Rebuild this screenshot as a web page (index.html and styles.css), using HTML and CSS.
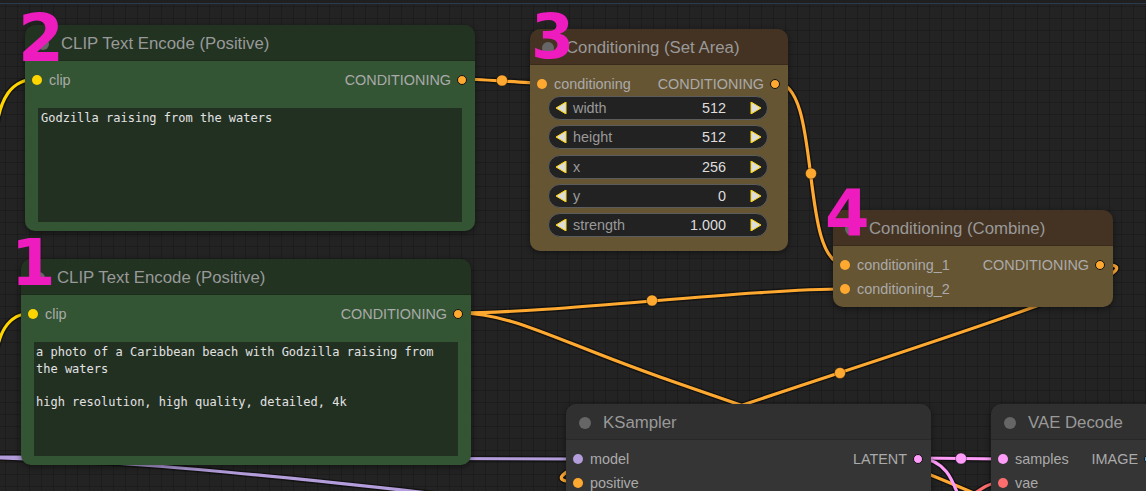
FILE: index.html
```html
<!DOCTYPE html>
<html>
<head>
<meta charset="utf-8">
<title>ComfyUI graph</title>
<link rel="stylesheet" href="styles.css">
</head>
<body>
<div class="canvas">
  <div class="topline"></div>

  <svg class="wires" width="1146" height="491" viewBox="0 0 1146 491">
    <g class="bd">
      <path d="M-4,130 C0,100 10,79 37,79"/>
      <path d="M-6,365 C-2,335 6,313 33,313"/>
      <path d="M-10,457 L578,459"/>
      <path d="M-100,456 C100,458 200,468 420,492 L700,530"/>
      <path d="M461,79 C481,79 522,83 542,83"/>
      <path d="M775,82 C824,82 797,265 846,265"/>
      <path d="M458,313 C555,313 749,289 846,289"/>
      <path d="M458,313 C512,313 555,340 660,377 S900,458 1000,505"/>
      <path d="M1100,264 C1241,264 437,482 578,482"/>
      <path d="M919,458 L1003,459"/>
      <path d="M919,458 C945,460 952,478 960,500"/>
      <path d="M965,500 C982,488 990,482 1003,482"/>
    </g>
    <path class="w yellow" d="M-4,130 C0,100 10,79 37,79"/>
    <path class="w yellow" d="M-6,365 C-2,335 6,313 33,313"/>
    <path class="w purple" d="M-10,457 L578,459"/>
    <path class="w purple" d="M-100,456 C100,458 200,468 420,492 L700,530"/>
    <path class="w orange" d="M461,79 C481,79 522,83 542,83"/>
    <path class="w orange" d="M775,82 C824,82 797,265 846,265"/>
    <path class="w orange" d="M458,313 C555,313 749,289 846,289"/>
    <path class="w orange" d="M458,313 C512,313 555,340 660,377 S900,458 1000,505"/>
    <path class="w orange" d="M1100,264 C1241,264 437,482 578,482"/>
    <path class="w pink" d="M919,458 C945,460 952,478 960,500"/>
    <path class="w red" d="M965,500 C982,488 990,482 1003,482"/>
    <path class="w pink" d="M919,458 L1003,459"/>
    <circle class="mid orange-f" cx="502" cy="80.5" r="5.5"/>
    <circle class="mid orange-f" cx="811" cy="173.5" r="5.5"/>
    <circle class="mid orange-f" cx="652" cy="300.5" r="5.5"/>
    <circle class="mid orange-f" cx="840" cy="373" r="5.5"/>
    <circle class="mid pink-f" cx="961" cy="458.5" r="5.5"/>
  </svg>

  <div class="node green n2">
    <div class="title"><span class="tdot"></span>CLIP Text Encode (Positive)</div>
    <div class="body">
      <div class="row">
        <div class="in"><span class="dot c-yellow"></span>clip</div>
        <div class="out">CONDITIONING<span class="dot odot c-orange"></span></div>
      </div>
      <div class="text">Godzilla raising from the waters</div>
    </div>
  </div>

  <div class="node green n1">
    <div class="title"><span class="tdot"></span>CLIP Text Encode (Positive)</div>
    <div class="body">
      <div class="row">
        <div class="in"><span class="dot c-yellow"></span>clip</div>
        <div class="out">CONDITIONING<span class="dot odot c-orange"></span></div>
      </div>
      <div class="text">a photo of a Caribbean beach with Godzilla raising from the waters

high resolution, high quality, detailed, 4k</div>
    </div>
  </div>

  <div class="node yellow n3">
    <div class="title"><span class="tdot"></span>Conditioning (Set Area)</div>
    <div class="body">
      <div class="row">
        <div class="in"><span class="dot c-orange"></span>conditioning</div>
        <div class="out">CONDITIONING<span class="dot odot c-orange"></span></div>
      </div>
      <div class="widgets">
        <div class="widget"><svg class="arr" viewBox="0 0 12 12"><path d="M10,0 L0,6 L10,12 Z"/></svg><span class="wl">width</span><span class="wv">512</span><svg class="arr" viewBox="0 0 12 12"><path d="M2,0 L12,6 L2,12 Z"/></svg></div>
        <div class="widget"><svg class="arr" viewBox="0 0 12 12"><path d="M10,0 L0,6 L10,12 Z"/></svg><span class="wl">height</span><span class="wv">512</span><svg class="arr" viewBox="0 0 12 12"><path d="M2,0 L12,6 L2,12 Z"/></svg></div>
        <div class="widget"><svg class="arr" viewBox="0 0 12 12"><path d="M10,0 L0,6 L10,12 Z"/></svg><span class="wl">x</span><span class="wv">256</span><svg class="arr" viewBox="0 0 12 12"><path d="M2,0 L12,6 L2,12 Z"/></svg></div>
        <div class="widget"><svg class="arr" viewBox="0 0 12 12"><path d="M10,0 L0,6 L10,12 Z"/></svg><span class="wl">y</span><span class="wv">0</span><svg class="arr" viewBox="0 0 12 12"><path d="M2,0 L12,6 L2,12 Z"/></svg></div>
        <div class="widget"><svg class="arr" viewBox="0 0 12 12"><path d="M10,0 L0,6 L10,12 Z"/></svg><span class="wl">strength</span><span class="wv">1.000</span><svg class="arr" viewBox="0 0 12 12"><path d="M2,0 L12,6 L2,12 Z"/></svg></div>
      </div>
    </div>
  </div>

  <div class="node yellow n4">
    <div class="title"><span class="tdot"></span>Conditioning (Combine)</div>
    <div class="body">
      <div class="row">
        <div class="in"><span class="dot c-orange"></span>conditioning_1</div>
        <div class="out">CONDITIONING<span class="dot odot c-orange"></span></div>
      </div>
      <div class="row">
        <div class="in"><span class="dot c-orange"></span>conditioning_2</div>
      </div>
    </div>
  </div>

  <div class="node grey n5">
    <div class="title"><span class="tdot"></span>KSampler</div>
    <div class="body">
      <div class="row">
        <div class="in"><span class="dot c-purple"></span>model</div>
        <div class="out">LATENT<span class="dot odot c-pink"></span></div>
      </div>
      <div class="row">
        <div class="in"><span class="dot c-orange"></span>positive</div>
      </div>
    </div>
  </div>

  <div class="node grey n6">
    <div class="title"><span class="tdot"></span>VAE Decode</div>
    <div class="body">
      <div class="row">
        <div class="in"><span class="dot c-pink"></span>samples</div>
        <div class="out">IMAGE<span class="dot odot c-blue"></span></div>
      </div>
      <div class="row">
        <div class="in"><span class="dot c-red"></span>vae</div>
      </div>
    </div>
  </div>

  <div class="num num2">2</div>
  <div class="num num3">3</div>
  <div class="num num1">1</div>
  <div class="num num4">4</div>
</div>
</body>
</html>
```

FILE: styles.css
```css
html, body {
  margin: 0;
  padding: 0;
  background: #222;
}

.canvas {
  position: relative;
  width: 1146px;
  height: 491px;
  overflow: hidden;
  background-color: #232323;
  background-image:
    linear-gradient(rgba(0, 0, 0, 0.16) 1px, transparent 1px),
    linear-gradient(90deg, rgba(0, 0, 0, 0.16) 1px, transparent 1px);
  background-size: 12px 12px;
  background-position: 5px 6px;
  font-family: "Liberation Sans", Arial, sans-serif;
}

.topline {
  position: absolute;
  left: 0;
  top: 0;
  width: 100%;
  height: 3px;
  background: #1f1f1f;
  border-bottom: 1px solid #2c3a4d;
}

/* wires */
.wires {
  position: absolute;
  left: 0;
  top: 0;
  overflow: visible;
}
.wires path {
  fill: none;
  stroke-linecap: round;
}
.bd path {
  stroke: rgba(0, 0, 0, 0.45);
  stroke-width: 6;
}
.w { stroke-width: 3.2; }
.yellow { stroke: #ffd500; }
.orange { stroke: #ffa931; }
.purple { stroke: #b39ddb; }
.pink { stroke: #ff9cf9; }
.red { stroke: #ff6e6e; }
.mid { stroke: rgba(0, 0, 0, 0.35); stroke-width: 1; }
.orange-f { fill: #ffa931; }
.pink-f { fill: #ff9cf9; }

/* nodes */
.node {
  position: absolute;
  border-radius: 10px;
  box-shadow: 0 2px 6px rgba(0, 0, 0, 0.45);
  overflow: hidden;
}
.title {
  height: 36px;
  line-height: 37px;
  padding-left: 36px;
  position: relative;
  font-size: 16.8px;
  color: #999;
  white-space: nowrap;
  box-shadow: inset 0 -1px 0 rgba(0, 0, 0, 0.15);
}
.tdot {
  position: absolute;
  left: 12px;
  top: 12.5px;
  width: 12px;
  height: 12px;
  border-radius: 50%;
  background: #666;
}
.body {
  padding-top: 7px;
}
.row {
  height: 24px;
  display: flex;
  align-items: center;
  justify-content: space-between;
  padding: 0 8px 0 7px;
  font-size: 14.4px;
  color: #aaa;
  white-space: nowrap;
}
.in, .out {
  display: flex;
  align-items: center;
}
.in { gap: 7px; }
.out { gap: 6px; margin-left: auto; }
.dot {
  width: 10px;
  height: 10px;
  border-radius: 50%;
  box-sizing: border-box;
  flex: none;
}
.odot { border: 1.3px solid #111; }
.c-yellow { background: #ffd500; }
.c-orange { background: #ffa931; }
.c-purple { background: #b39ddb; }
.c-pink { background: #ff9cf9; }
.c-red { background: #ff6e6e; }
.c-blue { background: #64b5f6; }

.green .title { background: #223322; }
.green .body { background: #335533; padding-bottom: 9px; }
.yellow .title { background: #443322; }
.yellow .body { background: #665533; }
.grey .title { background: #303030; }
.grey .body { background: #353535; }

.text {
  margin: 16px 13px 0;
  height: 114px;
  box-sizing: border-box;
  padding: 2px 2px 0 3px;
  background: #223022;
  color: #e2e2e2;
  font-family: "DejaVu Sans Mono", monospace;
  font-size: 12px;
  line-height: 16.67px;
  white-space: pre-wrap;
  overflow: hidden;
}

.n2 { left: 25px; top: 25px; width: 450px; }
.n1 { left: 21px; top: 259px; width: 450px; }
.n1 .text { padding-left: 2px; }
.n3 { left: 530px; top: 29px; width: 258px; }
.n3 .body { padding-bottom: 14px; }
.n4 { left: 833px; top: 210px; width: 280px; }
.n4 .body { padding-bottom: 6px; }
.n5 { left: 566px; top: 404px; width: 365px; height: 120px; }
.n5 .title, .n6 .title { padding-left: 37px; }
.n5 .tdot, .n6 .tdot { left: 13px; }
.n6 { left: 991px; top: 404px; width: 171px; height: 120px; }
.grey .body { height: 100%; }

.widgets {
  display: flex;
  flex-direction: column;
  gap: 5.25px;
  padding: 0 20px 0 18px;
}
.widget {
  height: 24px;
  box-sizing: border-box;
  border: 1px solid #5c5c5c;
  border-radius: 12px;
  background: #222;
  display: flex;
  align-items: center;
  padding: 0 6px 0 7px;
  font-size: 14.4px;
}
.arr {
  width: 12px;
  height: 12px;
  flex: none;
  fill: #ddd;
}
.wl {
  margin-left: 5px;
  color: #999;
  flex: 1;
}
.wv {
  color: #ddd;
  margin-right: 23px;
}

/* annotation numbers */
.num {
  position: absolute;
  font-family: "DejaVu Sans", sans-serif;
  font-weight: bold;
  font-size: 66px;
  line-height: 1;
  color: #ee1cbe;
}
.num2 { left: 18px; top: 6px; }
.num3 { left: 531px; top: 6px; font-size: 62px; }
.num1 { left: 11px; top: 231px; font-size: 64px; }
.num4 { left: 825px; top: 182px; font-size: 64px; }
```
